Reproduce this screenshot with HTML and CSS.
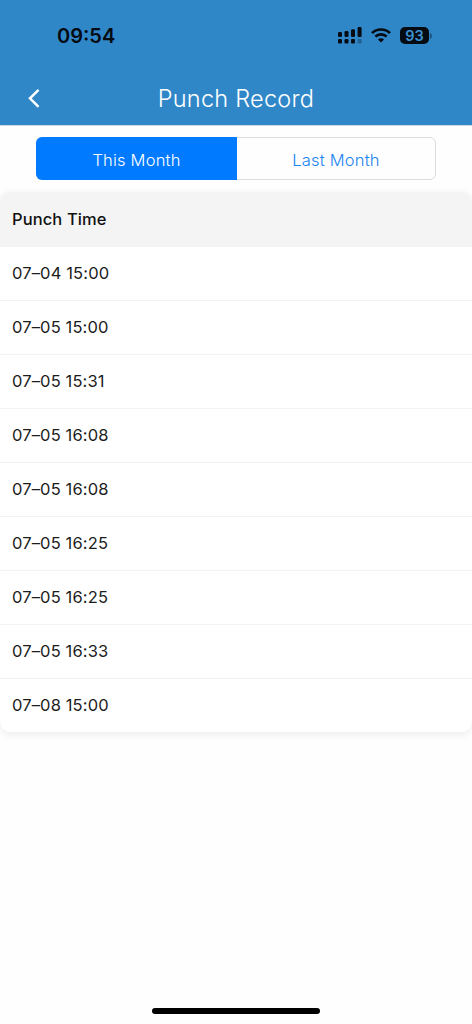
FILE: index.html
```html
<!DOCTYPE html>
<html lang="en">
<head>
<meta charset="utf-8">
<meta name="viewport" content="width=device-width, initial-scale=1">
<title>Punch Record</title>
<link rel="stylesheet" href="styles.css">
</head>
<body>
<div class="screen">
  <header class="header">
    <div class="status">
      <span class="clock">09:54</span>
      <div class="indicators">
        <svg class="signal" width="24" height="17" viewBox="0 0 24 17">
          <g fill="#050b12">
            <rect x="0" y="5" width="4" height="5" rx="1.2"/><rect x="6.5" y="4" width="4" height="6" rx="1.2"/><rect x="13" y="2.2" width="4" height="7.8" rx="1.2"/><rect x="19.6" y="0" width="4" height="10" rx="1.2"/>
            <rect x="0" y="12" width="4" height="4.4" rx="1.2"/><rect x="6.5" y="12" width="4" height="4.4" rx="1.2"/><rect x="13" y="12" width="4" height="4.4" rx="1.2"/><rect x="19.6" y="12" width="4" height="4.4" rx="1.2" opacity=".3"/>
          </g>
        </svg>
        <svg class="wifi" width="20" height="15" viewBox="0 0 20 15">
          <g fill="none" stroke="#050b12" stroke-width="2.7"><path d="M1 5.1C6 .3 14 .3 19 5.1"/><path d="M4.3 8.6c3.3-3 8.1-3 11.4 0"/></g>
          <path fill="#050b12" d="M10 14.6l-3.1-3.1c1.7-1.6 4.5-1.6 6.2 0z"/>
        </svg>
        <div class="battery">93</div>
        <svg class="battery-cap" width="2" height="6" viewBox="0 0 2 6"><path d="M0 0c2.6 1 2.6 5 0 6z" fill="#1c527d"/></svg>
      </div>
    </div>
    <div class="navbar">
      <svg class="back" width="12" height="19" viewBox="0 0 12 19"><path d="M9.8 1.6L2 9.3l7.8 7.8" fill="none" stroke="#fff" stroke-width="2.5" stroke-linecap="round" stroke-linejoin="miter"/></svg>
      <h1 class="title">Punch Record</h1>
    </div>
  </header>
  <main class="content">
    <div class="tabs">
      <div class="tab tab-active">This Month</div>
      <div class="tab">Last Month</div>
    </div>
    <div class="card">
      <div class="card-head">Punch Time</div>
      <div class="row">07–04 15:00</div>
      <div class="row">07–05 15:00</div>
      <div class="row">07–05 15:31</div>
      <div class="row">07–05 16:08</div>
      <div class="row">07–05 16:08</div>
      <div class="row">07–05 16:25</div>
      <div class="row">07–05 16:25</div>
      <div class="row">07–05 16:33</div>
      <div class="row">07–08 15:00</div>
    </div>
  </main>
  <div class="home-indicator"></div>
</div>
</body>
</html>
```
FILE: styles.css
```css
* { box-sizing: border-box; }
body { margin: 0; background: #fefefe; color: #1c1c1c; font-family: Inter, "Liberation Sans", sans-serif; }
.screen { width: 472px; height: 1024px; display: flex; flex-direction: column; overflow: hidden; }
.header { height: 126px; background: #3087c8; border-bottom: 1px solid #ccdae6; }
.status { height: 71px; padding: 0 40px 0 57px; display: flex; justify-content: space-between; align-items: center; }
.clock { color: #050b12; font-size: 20px; font-weight: 600; }
.indicators { display: flex; align-items: center; }
.wifi { margin-left: 9px; }
.battery { width: 29px; height: 17px; margin-left: 9px; border-radius: 5px; background: #050b12; color: #3d93d2; font-size: 14.5px; font-weight: 600; line-height: 17px; text-align: center; }
.battery-cap { margin-left: 1px; }
.navbar { height: 54px; display: grid; grid-template-columns: 60px 1fr 60px; align-items: center; }
.back { margin-left: 28px; }
.title { margin: 0; padding-top: 1px; color: #fff; font-size: 23.5px; font-weight: 300; line-height: 30px; letter-spacing: 0.25px; text-align: center; }
.content { flex: 1; padding-top: 11px; }
.tabs { width: 400px; height: 43px; margin-left: 36px; display: flex; border: 1px solid #dcdcdc; border-radius: 6px; }
.tab { flex: 1; display: flex; align-items: center; justify-content: center; padding-top: 2px; color: #1a83f0; font-size: 16.5px; font-weight: 350; letter-spacing: 0.2px; }
.tab-active { flex: 0 0 201px; margin: -1px 0 -1px -1px; border-radius: 6px 0 0 6px; background: #007aff; color: #fff; }
.card { margin-top: 12px; border-radius: 10px; overflow: hidden; background: #fff; box-shadow: 0 2px 10px rgba(0, 0, 0, 0.08); }
.card-head { height: 54px; padding-left: 12px; background: #f4f4f4; color: #111; font-size: 16.5px; font-weight: 500; line-height: 55px; letter-spacing: 0.1px; }
.row { height: 54px; padding-left: 12px; border-top: 1px solid #f3f3f3; font-size: 16.5px; line-height: 52px; letter-spacing: 0.14px; }
.home-indicator { width: 168px; height: 6px; margin: 0 auto 10px; border-radius: 3px; background: #000; }
```
